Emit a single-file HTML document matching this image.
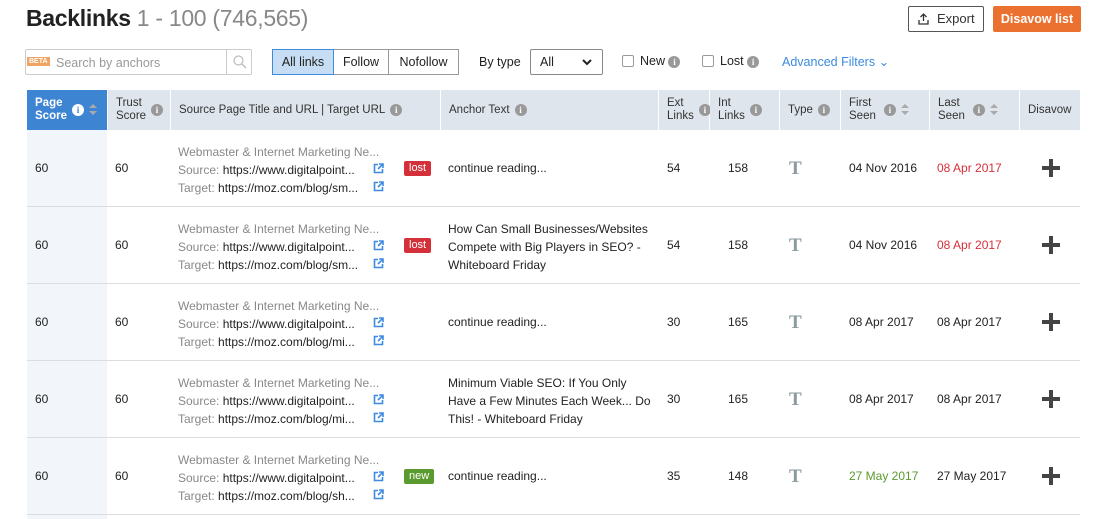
<!DOCTYPE html>
<html><head><meta charset="utf-8"><style>
*{box-sizing:border-box;margin:0;padding:0}
body{width:1104px;height:519px;overflow:hidden;background:#fff;font-family:"Liberation Sans",sans-serif;color:#222;font-size:12px;position:relative}
.a{position:absolute;white-space:nowrap}
.i{display:inline-block;width:12px;height:12px;border-radius:50%;background:#999;color:#fff;font-size:9px;font-weight:bold;text-align:center;line-height:12px;vertical-align:middle;font-family:"Liberation Serif",serif;flex:none}
.hd{position:absolute;top:90px;height:40px;background:#dfe5ec;font-size:11.5px;line-height:13px;color:#333;display:flex;align-items:center;padding-left:8px}
.hd .i{margin-left:5px}
.sort{display:inline-block;width:8px;height:12px;margin-left:5px;position:relative;flex:none}
.sort:before{content:"";position:absolute;top:0;left:0;border:4px solid transparent;border-bottom:4px solid #aaa;border-top:0}
.sort:after{content:"";position:absolute;top:7px;left:0;border:4px solid transparent;border-top:4px solid #aaa;border-bottom:0}
.row{position:absolute;left:27px;width:1053px;height:77px;border-bottom:1px solid #ddd}
.g{color:#888}
.ext{position:absolute;left:346px;width:11px;height:11px}
.tag{position:absolute;left:377px;top:31px;height:15px;padding:0 5px;color:#fff;font-size:11px;line-height:15px;border-radius:2px}
.T{position:absolute;left:762px;top:28px;font-family:"Liberation Serif",serif;font-weight:bold;font-size:19px;color:#8a9aa0}
.plus{position:absolute;left:1015px;top:29px;width:18px;height:18px}
.plus:before{content:"";position:absolute;left:7px;top:0;width:4px;height:18px;background:#444}
.plus:after{content:"";position:absolute;left:0;top:7px;width:18px;height:4px;background:#444}
</style></head><body>
<svg width="0" height="0" style="position:absolute"><symbol id="ex" viewBox="0 0 11 11"><path d="M5 1.5H1.5V9.5H9.5V6" fill="none" stroke="#3d8be0" stroke-width="1.6"/><path d="M6 1H10V5M10 1L5 6" fill="none" stroke="#3d8be0" stroke-width="1.6"/></symbol></svg>
<div class="a" style="left:26px;top:5px;font-size:23px;font-weight:bold;color:#222;letter-spacing:-0.3px">Backlinks <span style="font-weight:normal;color:#888">1 - 100 (746,565)</span></div>
<div class="a" style="left:908px;top:6px;width:76px;height:26px;border:1px solid #555;border-radius:2px;font-size:13px;line-height:24px;padding-left:28px;color:#333"><svg style="position:absolute;left:9px;top:6px" width="11" height="12" viewBox="0 0 11 12"><path d="M5.5 8V1M2.5 4L5.5 1L8.5 4M1 7V11H10V7" fill="none" stroke="#333" stroke-width="1.3"/></svg>Export</div>
<div class="a" style="left:993px;top:6px;width:88px;height:26px;background:#eb7131;border-radius:2px;color:#fff;font-size:12.5px;font-weight:bold;line-height:26px;text-align:center">Disavow list</div>
<div class="a" style="left:25px;top:49px;width:227px;height:26px;border:1px solid #ccc;border-radius:2px"><span style="position:absolute;left:1px;top:7px;background:#f0a463;color:#fff;font-size:7px;font-weight:bold;padding:1px 2px">BETA</span><span style="position:absolute;left:30px;top:6px;color:#999;font-size:12.5px">Search by anchors</span><span style="position:absolute;left:200px;top:-1px;width:1px;height:26px;background:#ccc"></span><svg style="position:absolute;left:207px;top:5px" width="14" height="14" viewBox="0 0 14 14"><circle cx="5.5" cy="5.5" r="4.5" fill="none" stroke="#bbb" stroke-width="1.2"/><path d="M9 9L13 13" stroke="#bbb" stroke-width="1.3"/></svg></div>
<div class="a" style="left:272px;top:49px;width:62px;height:26px;border:1px solid #3d8be0;background:#c6ddf3;font-size:12.5px;line-height:24px;text-align:center">All links</div>
<div class="a" style="left:334px;top:49px;width:55px;height:26px;border:1px solid #999;border-left:0;font-size:12.5px;line-height:24px;text-align:center">Follow</div>
<div class="a" style="left:389px;top:49px;width:70px;height:26px;border:1px solid #999;border-left:0;font-size:12.5px;line-height:24px;text-align:center">Nofollow</div>
<div class="a" style="left:479px;top:55px;font-size:12.5px">By type</div>
<div class="a" style="left:530px;top:49px;width:73px;height:26px;border:1px solid #888;border-radius:2px;font-size:12.5px;line-height:24px;padding-left:9px">All<svg style="position:absolute;right:10px;top:9px" width="10" height="7" viewBox="0 0 10 7"><path d="M1 1L5 5L9 1" fill="none" stroke="#222" stroke-width="2"/></svg></div>
<div class="a" style="left:622px;top:55px;width:12px;height:12px;border:1px solid #999;border-radius:2px"></div>
<div class="a" style="left:640px;top:54px;font-size:12.5px">New <span class="i">i</span></div>
<div class="a" style="left:702px;top:55px;width:12px;height:12px;border:1px solid #999;border-radius:2px"></div>
<div class="a" style="left:720px;top:54px;font-size:12.5px">Lost <span class="i">i</span></div>
<div class="a" style="left:782px;top:54px;font-size:12.5px;color:#3d8be0">Advanced Filters ⌄</div>

<div class="hd" style="left:27px;width:80px;background:#3d84d3;color:#fff;font-weight:bold"><span>Page<br>Score</span><span class="i" style="background:#fff;color:#3d84d3">i</span><span class="sort"></span></div>
<div class="hd" style="left:108px;width:62px"><span>Trust<br>Score</span><span class="i">i</span></div>
<div class="hd" style="left:171px;width:269px">Source Page Title and URL | Target URL<span class="i">i</span></div>
<div class="hd" style="left:441px;width:217px">Anchor Text<span class="i">i</span></div>
<div class="hd" style="left:659px;width:50px"><span>Ext<br>Links</span><span class="i">i</span></div>
<div class="hd" style="left:710px;width:69px"><span>Int<br>Links</span><span class="i">i</span></div>
<div class="hd" style="left:780px;width:60px">Type<span class="i">i</span></div>
<div class="hd" style="left:841px;width:88px"><span>First<br>Seen</span><span class="i" style="margin-left:8px">i</span><span class="sort"></span></div>
<div class="hd" style="left:930px;width:89px"><span>Last<br>Seen</span><span class="i" style="margin-left:8px">i</span><span class="sort"></span></div>
<div class="hd" style="left:1020px;width:60px">Disavow</div>

<div class="a" style="left:27px;top:130px;width:80px;height:389px;background:#f2f6fa"></div>

<div class="row" style="top:130px">
<div class="a" style="left:8px;top:31px">60</div><div class="a" style="left:88px;top:31px">60</div>
<div class="a" style="left:151px;top:13px;line-height:18px"><span class="g">Webmaster &amp; Internet Marketing Ne...</span><br><span class="g">Source:</span> https://www.digitalpoint...<br><span class="g">Target:</span> https://moz.com/blog/sm...</div>
<svg class="ext" style="top:33px"><use href="#ex"/></svg><svg class="ext" style="top:51px"><use href="#ex"/></svg>
<div class="tag" style="background:#d4303a">lost</div>
<div class="a" style="left:421px;top:31px">continue reading...</div>
<div class="a" style="left:640px;top:31px">54</div><div class="a" style="left:701px;top:31px">158</div>
<div class="T">T</div>
<div class="a" style="left:822px;top:31px">04 Nov 2016</div><div class="a" style="left:910px;top:31px;color:#d4303a">08 Apr 2017</div>
<div class="plus"></div></div>

<div class="row" style="top:207px">
<div class="a" style="left:8px;top:31px">60</div><div class="a" style="left:88px;top:31px">60</div>
<div class="a" style="left:151px;top:13px;line-height:18px"><span class="g">Webmaster &amp; Internet Marketing Ne...</span><br><span class="g">Source:</span> https://www.digitalpoint...<br><span class="g">Target:</span> https://moz.com/blog/sm...</div>
<svg class="ext" style="top:33px"><use href="#ex"/></svg><svg class="ext" style="top:51px"><use href="#ex"/></svg>
<div class="tag" style="background:#d4303a">lost</div>
<div class="a" style="left:421px;top:13px;line-height:18px">How Can Small Businesses/Websites<br>Compete with Big Players in SEO? -<br>Whiteboard Friday</div>
<div class="a" style="left:640px;top:31px">54</div><div class="a" style="left:701px;top:31px">158</div>
<div class="T">T</div>
<div class="a" style="left:822px;top:31px">04 Nov 2016</div><div class="a" style="left:910px;top:31px;color:#d4303a">08 Apr 2017</div>
<div class="plus"></div></div>

<div class="row" style="top:284px">
<div class="a" style="left:8px;top:31px">60</div><div class="a" style="left:88px;top:31px">60</div>
<div class="a" style="left:151px;top:13px;line-height:18px"><span class="g">Webmaster &amp; Internet Marketing Ne...</span><br><span class="g">Source:</span> https://www.digitalpoint...<br><span class="g">Target:</span> https://moz.com/blog/mi...</div>
<svg class="ext" style="top:33px"><use href="#ex"/></svg><svg class="ext" style="top:51px"><use href="#ex"/></svg>
<div class="a" style="left:421px;top:31px">continue reading...</div>
<div class="a" style="left:640px;top:31px">30</div><div class="a" style="left:701px;top:31px">165</div>
<div class="T">T</div>
<div class="a" style="left:822px;top:31px">08 Apr 2017</div><div class="a" style="left:910px;top:31px">08 Apr 2017</div>
<div class="plus"></div></div>

<div class="row" style="top:361px">
<div class="a" style="left:8px;top:31px">60</div><div class="a" style="left:88px;top:31px">60</div>
<div class="a" style="left:151px;top:13px;line-height:18px"><span class="g">Webmaster &amp; Internet Marketing Ne...</span><br><span class="g">Source:</span> https://www.digitalpoint...<br><span class="g">Target:</span> https://moz.com/blog/mi...</div>
<svg class="ext" style="top:33px"><use href="#ex"/></svg><svg class="ext" style="top:51px"><use href="#ex"/></svg>
<div class="a" style="left:421px;top:13px;line-height:18px">Minimum Viable SEO: If You Only<br>Have a Few Minutes Each Week... Do<br>This! - Whiteboard Friday</div>
<div class="a" style="left:640px;top:31px">30</div><div class="a" style="left:701px;top:31px">165</div>
<div class="T">T</div>
<div class="a" style="left:822px;top:31px">08 Apr 2017</div><div class="a" style="left:910px;top:31px">08 Apr 2017</div>
<div class="plus"></div></div>

<div class="row" style="top:438px">
<div class="a" style="left:8px;top:31px">60</div><div class="a" style="left:88px;top:31px">60</div>
<div class="a" style="left:151px;top:13px;line-height:18px"><span class="g">Webmaster &amp; Internet Marketing Ne...</span><br><span class="g">Source:</span> https://www.digitalpoint...<br><span class="g">Target:</span> https://moz.com/blog/sh...</div>
<svg class="ext" style="top:33px"><use href="#ex"/></svg><svg class="ext" style="top:51px"><use href="#ex"/></svg>
<div class="tag" style="background:#5a9a2e">new</div>
<div class="a" style="left:421px;top:31px">continue reading...</div>
<div class="a" style="left:640px;top:31px">35</div><div class="a" style="left:701px;top:31px">148</div>
<div class="T">T</div>
<div class="a" style="left:822px;top:31px;color:#5a9a2e">27 May 2017</div><div class="a" style="left:910px;top:31px">27 May 2017</div>
<div class="plus"></div></div>
</body></html>
